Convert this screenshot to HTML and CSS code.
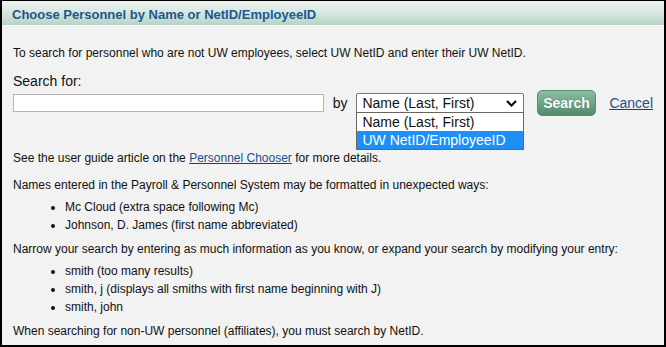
FILE: index.html
```html
<!DOCTYPE html>
<html lang="en">
<head>
<meta charset="utf-8">
<title>Choose Personnel</title>
<link rel="stylesheet" href="styles.css">
</head>
<body>
<div class="frame">
  <div class="header"><h1 class="title">Choose Personnel by Name or NetID/EmployeeID</h1></div>
  <div class="content">
    <p class="intro">To search for personnel who are not UW employees, select UW NetID and enter their UW NetID.</p>
    <label class="search-label">Search for:</label>
    <div class="search-row">
      <div class="text-input"></div>
      <span class="by">by</span>
      <div class="select-wrap">
        <div class="select">
          <span>Name (Last, First)</span>
          <svg class="chev" width="11" height="7" viewBox="0 0 11 7"><path d="M1 1 L5.5 5.5 L10 1" fill="none" stroke="#000" stroke-width="2"/></svg>
        </div>
        <div class="dropdown">
          <div class="option">Name (Last, First)</div>
          <div class="option selected">UW NetID/EmployeeID</div>
        </div>
      </div>
      <button class="btn">Search</button>
      <a class="cancel" href="#">Cancel</a>
    </div>
    <p class="guide">See the user guide article on the <a class="link" href="#">Personnel Chooser</a> for more details.</p>
    <p>Names entered in the Payroll &amp; Personnel System may be formatted in unexpected ways:</p>
    <ul>
      <li>Mc Cloud (extra space following Mc)</li>
      <li>Johnson, D. James (first name abbreviated)</li>
    </ul>
    <p>Narrow your search by entering as much information as you know, or expand your search by modifying your entry:</p>
    <ul>
      <li>smith (too many results)</li>
      <li>smith, j (displays all smiths with first name beginning with J)</li>
      <li>smith, john</li>
    </ul>
    <p>When searching for non-UW personnel (affiliates), you must search by NetID.</p>
  </div>
</div>
</body>
</html>
```
FILE: styles.css
```css
* { box-sizing: border-box; }
html, body { margin: 0; padding: 0; }
body {
  font-family: "Liberation Sans", Arial, sans-serif;
  color: #111;
  background: #fff;
}
.frame {
  width: 666px;
  height: 347px;
  border-style: solid;
  border-color: #000;
  border-width: 1px 2px 2px 2px;
  background: #f2f2f2;
  overflow: hidden;
}
.header {
  height: 25px;
  background: linear-gradient(to bottom, #eef4f1 0%, #d3e5dc 55%, #b7d3c5 100%);
  border-bottom: 1px solid #fafafa;
  padding-left: 10px;
  display: flex;
  align-items: center;
}
.title {
  margin: 0;
  font-size: 13px;
  font-weight: bold;
  color: #1d5793;
  position: relative;
  top: 1px;
}
.content {
  padding: 18px 11px 0 11px;
  font-size: 12px;
}
p {
  margin: 4px 0;
  line-height: 18px;
}
.intro { margin: 0; }
.search-label {
  display: block;
  font-size: 14px;
  line-height: 18px;
  margin-top: 10px;
}
.search-row {
  display: flex;
  align-items: center;
  height: 26px;
  margin-top: 0;
}
.text-input {
  width: 312px;
  height: 18px;
  background: #fff;
  border: 1px solid #b4b4b4;
}
.by {
  font-size: 14px;
  margin-left: 9px;
  margin-right: 9px;
}
.select-wrap {
  position: relative;
  width: 168px;
}
.select {
  height: 20px;
  background: #fff;
  border: 1px solid #767676;
  border-radius: 2px;
  font-size: 14px;
  padding-left: 5px;
  display: flex;
  align-items: center;
  justify-content: space-between;
  padding-right: 6px;
}
.chev { display: block; }
.dropdown {
  position: absolute;
  left: 0;
  top: 19px;
  width: 168px;
  background: #fff;
  border: 1px solid #6b6560;
  font-size: 14px;
}
.option {
  height: 18px;
  line-height: 18px;
  padding-left: 5px;
}
.option.selected {
  background: #1e8ff7;
  color: #fff;
}
.btn {
  margin-left: 13px;
  width: 60px;
  height: 26px;
  border: 1px solid #5c8c74;
  border-radius: 5px;
  background: linear-gradient(to bottom, #8dbca4 0%, #6fa58a 50%, #4f8a6d 100%);
  color: #fff;
  font-family: "Liberation Sans", Arial, sans-serif;
  font-weight: bold;
  font-size: 14px;
  padding: 0;
  text-shadow: 0 0 1px #3d6a55;
}
.cancel {
  margin-left: 13px;
  font-size: 14px;
  color: #1d4f8c;
  text-decoration: underline;
  text-decoration-color: #1d3f6c;
}
.guide { margin-top: 33px; margin-bottom: 9px; }
.link {
  color: #1d4f8c;
  text-decoration: underline;
  text-decoration-color: #1d3f6c;
}
ul {
  margin: 2px 0 6px 0;
  padding-left: 52px;
  line-height: 18px;
}
li { padding-left: 0; }
```
